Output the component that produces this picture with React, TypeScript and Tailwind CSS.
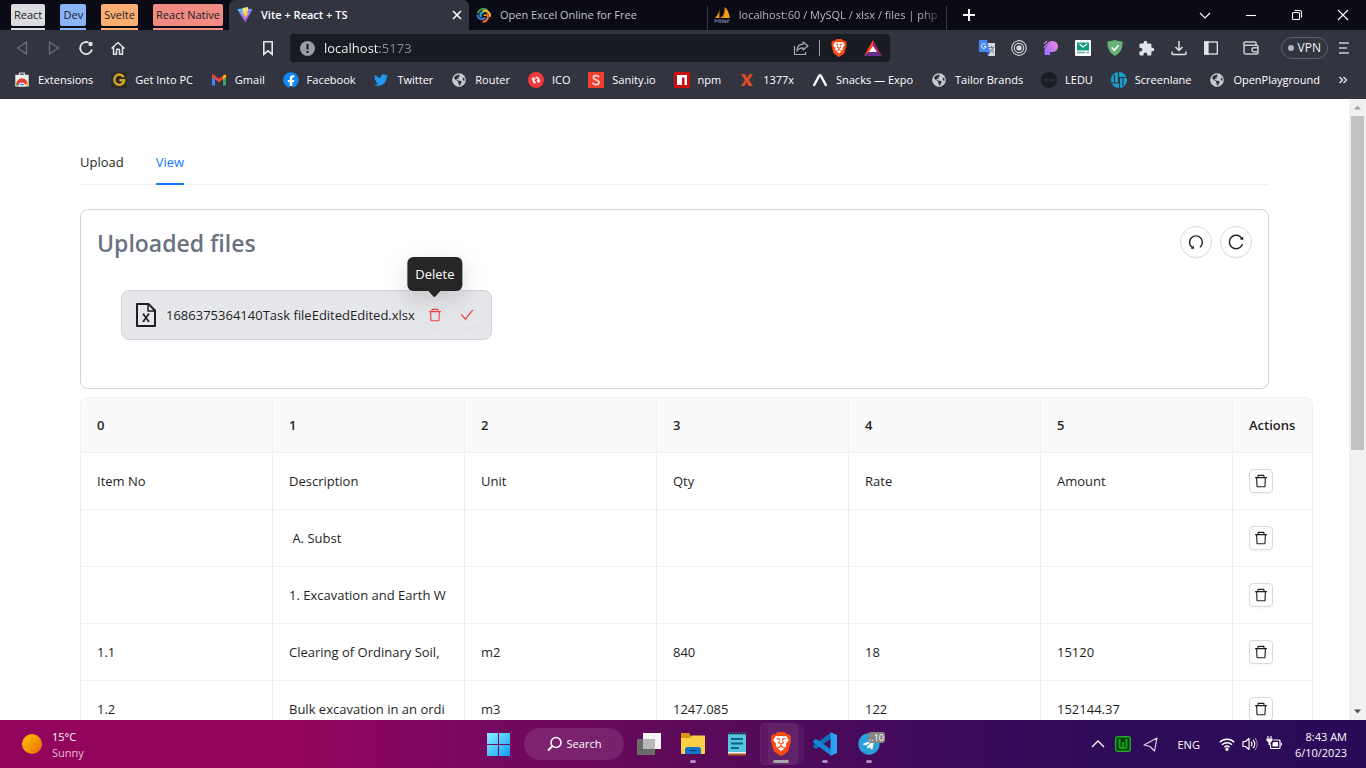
import type { ReactNode } from "react";
import {
  AiOutlineCheck,
  AiOutlineDelete,
  AiOutlineReload,
  AiOutlineUndo,
} from "react-icons/ai";
import { FaFacebook, FaGlobeAmericas, FaTelegram, FaTwitter } from "react-icons/fa";
import { MdExtension } from "react-icons/md";
import { SiBrave } from "react-icons/si";

/* ---------- icons ---------- */

const Vite = () => (
  <svg className="size-4" viewBox="0 0 16 16">
    <defs>
      <linearGradient id="vite" x1="0" y1="0" x2="0.6" y2="1">
        <stop offset="0" stopColor="#41d1ff" />
        <stop offset="1" stopColor="#bd34fe" />
      </linearGradient>
      <linearGradient id="bolt" x1="0" y1="0" x2="0" y2="1">
        <stop offset="0" stopColor="#ffea83" />
        <stop offset="1" stopColor="#ffa800" />
      </linearGradient>
    </defs>
    <path d="M0.3 2.2 7.6 1l8 1.2L8.3 15.6z" fill="url(#vite)" />
    <path d="M11 0 5.8 1.1 5.4 7l1.7-.4-.5 2.6 1.6-.5-1 4.6L11.6 6l-1.8.3L11 3z" fill="url(#bolt)" />
  </svg>
);

const Swirl = () => (
  <svg className="size-4" viewBox="0 0 16 16" fill="none" strokeWidth="2.2" strokeLinecap="round">
    <path d="M2 5.500C4 1.500 8.500 .8 11 3.200" stroke="#3f9b54" />
    <path d="M7 4.500C10 3 14 5 14 9" stroke="#f3b52d" />
    <path d="M11 7.500C13 10 11.500 13.800 7.500 14.800" stroke="#e96b2c" />
    <path d="M8.500 11.200C5.500 13.500 2 11.500 1.600 8.500" stroke="#3a77c8" />
    <path d="M5 9.200C3.800 7.800 4.800 5.600 7 5.400" stroke="#2aa5c9" />
    <path d="M8 8.300h1.500" stroke="#f3b52d" strokeWidth="1.500" />
  </svg>
);

const Sails = () => (
  <svg className="size-[17px]" viewBox="0 0 17 17">
    <path d="M5.500 1C5.500 5 4 8.500 1 11h4.500zM10.500 0c.8 4 0 8-4 11H16C15.500 6 13.500 2 10.500 0z" fill="#f29a1f" />
    <path d="M10.500 2.500c0 4-.5 6-2 8.500" stroke="#8a4f08" strokeWidth=".7" fill="none" />
    <path d="M1 16v-3h2v2M5 16v-3h2v3M9 16v-3l2 2 1-2v3M14 16v-3h2" stroke="#6f7391" strokeWidth="1.100" fill="none" />
  </svg>
);

const Brave = ({ big = false }: { big?: boolean }) => (
  <span className={big ? "relative block size-6" : "relative block size-[18px]"}>
    <svg className="absolute inset-0 size-full" viewBox="0 0 24 24">
      <path d="M6 4h12l2 4-3 10-5 4-5-4L4 8z" fill="#fff" />
    </svg>
    <SiBrave className="absolute inset-0 size-full text-[#fb4a12]" />
  </span>
);

const Bat = () => (
  <svg className="h-4 w-[18px]" viewBox="0 0 18 16">
    <path d="M9 0 0 16l9-6z" fill="#ff4724" />
    <path d="M9 0v7l3 4 6 5z" fill="#9e1f63" />
    <path d="M0 16h18l-6-5H6z" fill="#662d91" />
    <path d="m9 6-4 6h8z" fill="#fff" />
  </svg>
);

const Translate = () => (
  <svg className="size-4" viewBox="0 0 16 16">
    <path d="M7 3h9v13H9z" fill="#d5d7db" />
    <path d="M0 0h8l3 12H0z" fill="#4a86f0" />
    <path d="M7.500 12H11l-2 4z" fill="#2a5bc4" />
    <path d="M6.500 4.600A2.300 2.300 0 1 0 7 6.500H5" stroke="#fff" strokeWidth="1" fill="none" />
    <path d="M10 7.500h5M12.500 6v1.500M14 7.500c0 2-1.500 4-3 5M11.500 9c.5 1.500 2 3 3.500 3.700" stroke="#7b7f86" fill="none" />
  </svg>
);

const Rings = () => (
  <svg className="size-4" viewBox="0 0 16 16" fill="none" stroke="#c4c6cc" strokeWidth="1.200">
    <circle cx="8" cy="8" r="7.300" />
    <circle cx="8" cy="8" r="4.700" />
    <circle cx="8" cy="8" r="2.200" fill="#e3e4e7" />
  </svg>
);

const PurpleP = () => (
  <svg className="size-4" viewBox="0 0 16 16">
    <defs>
      <linearGradient id="pp" x1="1" y1="0" x2="0" y2="1">
        <stop offset="0" stopColor="#f58bd8" />
        <stop offset="1" stopColor="#8f6bff" />
      </linearGradient>
    </defs>
    <path d="M8 1h1.500a5.500 5.500 0 0 1 0 11H7v3H1.500V9z" fill="url(#pp)" />
    <path d="m1 4 3-3M1 7.500 7 1.500" stroke="#c77be8" strokeWidth="1.200" />
  </svg>
);

const MailBox = () => (
  <svg className="size-4" viewBox="0 0 16 16">
    <rect width="16" height="16" rx="1" fill="#fff" />
    <path d="M2 2.500h12v8H2z" fill="#109a80" />
    <path d="m4.500 4 3.500 3L12 4" stroke="#fff" strokeWidth="1.300" fill="none" />
    <path d="M2 12.500h8M11.500 12.500H14" stroke="#63a99c" strokeWidth="1.500" />
  </svg>
);

const Shield = () => (
  <svg className="size-4" viewBox="0 0 16 16">
    <path d="M8 0c2.500.8 5 1.300 7.500 1.500C15.800 8.500 13.500 13 8 16 2.500 13 .2 8.500.5 1.500 3 1.300 5.500.8 8 0z" fill="#67b279" />
    <path d="m4.800 7.500 2.500 2.700 4.200-5" stroke="#fff" strokeWidth="1.600" fill="none" />
  </svg>
);

const Store = () => (
  <svg className="size-4" viewBox="0 0 16 16">
    <path d="M5.500 3V1.200h5V3" stroke="#c9ccd1" strokeWidth="1.300" fill="none" />
    <path d="M1.300 2.800h13.400V14H1.300z" fill="#eceef0" />
    <path d="M2.300 12a5.700 5.700 0 0 1 11.400 0v2H2.300z" fill="#e34234" />
    <path d="M2.300 10.500 5.800 14H2.300z" fill="#2fa552" />
    <path d="M13.700 9.500 10.200 14h3.500z" fill="#f6c026" />
    <path d="M5 14a3 3 0 0 1 6 0z" fill="#4285f4" stroke="#fff" strokeWidth="1" />
    <path d="M1.300 14h13.400" stroke="#eceef0" />
  </svg>
);

const GetInto = () => (
  <svg className="size-4" viewBox="0 0 16 16">
    <rect width="16" height="16" fill="#2c2b2b" />
    <path d="M12.700 5.200A5 5.200 0 1 0 13 9.500V8.300H8.500" stroke="#d9a520" strokeWidth="2.400" fill="none" />
  </svg>
);

const Gmail = () => (
  <svg className="size-4" viewBox="0 0 16 16">
    <path d="M1 4v9.500h3V6z" fill="#4285f4" />
    <path d="M15 4v9.500h-3V6z" fill="#34a853" />
    <path d="M1 5V2.600h1.800L8 6.800l5.200-4.200L15 5l-7 5.500z" fill="#ea4335" />
    <path d="m12 4 1.500-1.300L15 3v2.200l-3 2.200z" fill="#fbbc04" />
  </svg>
);

const Ico = () => (
  <svg className="size-4" viewBox="0 0 16 16">
    <circle cx="8" cy="8" r="8" fill="#f03a3e" />
    <path d="M3.200 7.500 5.500 5l2.300 2.500zM12.800 8.500 10.500 11 8.200 8.500z" fill="#fff" />
    <path d="M5.500 7v1.500A2 2 0 0 0 7.500 10.500H8M10.500 9V7.500A2 2 0 0 0 8.500 5.500H7.500" stroke="#fff" strokeWidth="1.700" fill="none" />
  </svg>
);

const Sanity = () => (
  <svg className="size-4" viewBox="0 0 16 16">
    <rect width="16" height="16" fill="#f03e2f" />
    <path d="M11 5.200C10.300 3 5.300 3.200 5.300 5.600c0 2.700 5.700 1.800 5.700 4.800 0 2.800-5.600 2.800-6.200.3" stroke="#ffd9d5" strokeWidth="1.700" fill="none" />
  </svg>
);

const Npm = () => (
  <svg className="size-4" viewBox="0 0 16 16">
    <rect width="16" height="16" fill="#c90c0c" />
    <path d="M3 3h10v10h-2.500V5.500H8V13H3z" fill="#fff" />
  </svg>
);

const Ex = () => (
  <svg className="size-4" viewBox="0 0 16 16">
    <path d="M2 2h4l2 4 2.500-4H14L10 8l4 6H9.500L7.500 10 5.500 14H2l4-6z" fill="#dc4a24" />
  </svg>
);

const Expo = () => (
  <svg className="size-4" viewBox="0 0 16 16">
    <path d="M2.200 13 7 4c.6-1 1.400-1 2 0l4.800 9" stroke="#fff" strokeWidth="2.400" strokeLinecap="round" fill="none" />
  </svg>
);

const Ledu = () => (
  <svg className="size-4" viewBox="0 0 16 16">
    <circle cx="8" cy="8" r="8" fill="#1b1d23" />
    <path d="M3 7v2.200h1.500M7 7H5.500v2.200H7M8.300 7v2.200c1.600 0 1.600-2.200 0-2.200M11 7v2.200h1.800V7" stroke="#383a43" strokeWidth=".7" fill="none" />
  </svg>
);

const Screenlane = () => (
  <svg className="size-4" viewBox="0 0 16 16">
    <circle cx="8" cy="8" r="8" fill="#17a2d2" />
    <path d="M7.500 0v11H0M3.500 2.500V11M8.500 16V5.500H16M12 5.500V14" stroke="#323440" strokeWidth="1.200" fill="none" />
  </svg>
);

const Globe = () => <FaGlobeAmericas className="size-[14px] text-[#c6c8cc]" />;

const Facebook = () => (
  <span className="rounded-full bg-[radial-gradient(#fff_55%,transparent_56%)]">
    <FaFacebook className="size-4 text-[#1187f3]" />
  </span>
);

const ExcelFile = () => (
  <svg className="h-6 w-5" viewBox="0 0 20 24" fill="none" stroke="#1f1f1f" strokeWidth="2">
    <path d="M1 1h11.500L19 7.500V23H1z" strokeLinejoin="round" />
    <path d="M12 1v7h7" strokeWidth="1.500" />
    <path d="m7.200 11 5.600 7.500M12.800 11l-5.600 7.500" strokeWidth="1.600" />
    <path d="M6.500 11h2M11.500 11h2M6.500 18.500h2M11.500 18.500h2" strokeWidth=".9" />
  </svg>
);

/* ---------- browser chrome ---------- */

const groups = [
  { label: "React", box: "bg-[#dadce0]" },
  { label: "Dev", box: "bg-[#8ab4f8]" },
  { label: "Svelte", box: "bg-[#fcad70]" },
  { label: "React Native", box: "bg-[#f28b82]" },
];

function TabStrip() {
  return (
    <header className="flex h-[30px] shrink-0 bg-[#0a0b14] text-[11px] text-[#c3c4ca]">
      <div className="flex w-[229px] shrink-0 justify-between pt-1 pr-1.5 pl-[11px]">
        {groups.map((g) => (
          <button key={g.label} className="flex flex-col gap-0.5 text-[#202124]">
            <span className={`rounded-xs px-[3px] leading-[22px] ${g.box}`}>{g.label}</span>
            <span className={`h-0.5 w-full ${g.box}`} />
          </button>
        ))}
      </div>
      <div className="flex w-60 shrink-0 items-center gap-2 rounded-t-md bg-[#323440] pr-1.5 pl-2 font-semibold text-white">
        <Vite />
        <span className="flex-1">Vite + React + TS</span>
        <button aria-label="Close tab">
          <svg className="size-3" viewBox="0 0 12 12">
            <path d="m2 2 8 8M10 2l-8 8" stroke="#fff" strokeWidth="1.500" />
          </svg>
        </button>
      </div>
      <div className="flex w-[239px] shrink-0 items-center gap-2 pl-[7px]">
        <Swirl />
        <span className="flex-1">Open Excel Online for Free</span>
        <span className="mt-1.5 h-6 w-px bg-[#3a3b45]" />
      </div>
      <div className="flex w-[239px] shrink-0 items-center gap-2 pl-1.5">
        <Sails />
        <span className="w-[202px] overflow-hidden bg-[linear-gradient(90deg,#c3c4ca_180px,transparent_206px)] bg-clip-text whitespace-nowrap text-transparent">
          localhost:60 / MySQL / xlsx / files | php
        </span>
        <span className="mt-1.5 ml-auto h-6 w-px bg-[#3a3b45]" />
      </div>
      <button aria-label="New tab" className="flex w-11 items-center justify-center">
        <svg className="size-3" viewBox="0 0 12 12">
          <path d="M6 0v12M0 6h12" stroke="#fff" strokeWidth="2" />
        </svg>
      </button>
      <div className="ml-auto flex text-white">
        {[
          ["Search tabs", "m1 4 5 5 5-5"],
          ["Minimize", "M1 6.500h10"],
          ["Restore", "M1.500 4.500a1 1 0 0 1 1-1h5a1 1 0 0 1 1 1v5a1 1 0 0 1-1 1h-5a1 1 0 0 1-1-1zM3.500 1.500h5a2 2 0 0 1 2 2v5"],
          ["Close window", "m1 1 10 10M11 1 1 11"],
        ].map(([label, d]) => (
          <button key={label} aria-label={label} className="flex w-[46px] items-center justify-center">
            <svg className="size-3" viewBox="0 0 12 12" fill="none" stroke="currentColor" strokeWidth="1.100">
              <path d={d} />
            </svg>
          </button>
        ))}
      </div>
    </header>
  );
}

function Tool({ label, children }: { label: string; children: ReactNode }) {
  return (
    <button aria-label={label} className="flex w-8 shrink-0 items-center justify-center text-[#e3e4e8]">
      {children}
    </button>
  );
}

function Toolbar() {
  return (
    <div className="flex h-9 shrink-0 items-center bg-[#323440] px-1.5">
      <Tool label="Back">
        <svg className="size-4" viewBox="0 0 16 16" fill="none" stroke="#6c6e79" strokeWidth="1.400" strokeLinejoin="round">
          <path d="M12.500 2v12L3.500 8z" />
        </svg>
      </Tool>
      <Tool label="Forward">
        <svg className="size-4" viewBox="0 0 16 16" fill="none" stroke="#6c6e79" strokeWidth="1.400" strokeLinejoin="round">
          <path d="M3.500 2v12l9-6z" />
        </svg>
      </Tool>
      <Tool label="Reload">
        <svg className="size-4" viewBox="0 0 16 16" fill="none" stroke="currentColor" strokeWidth="1.800">
          <path d="M10.500 2.500A6 6 0 1 0 14 9.500" />
          <circle cx="12.500" cy="4" r="2.200" fill="currentColor" stroke="none" />
        </svg>
      </Tool>
      <Tool label="Home">
        <svg className="size-4" viewBox="0 0 16 16" fill="none" stroke="currentColor" strokeWidth="1.500" strokeLinejoin="round">
          <path d="m1.500 8.500 6.500-6 6.500 6M3.500 7v7.200h3V10.500a1.500 1.500 0 0 1 3 0v3.700h3V7" />
        </svg>
      </Tool>
      <button aria-label="Bookmark this tab" className="ml-[118px] flex w-8 shrink-0 justify-center text-[#e3e4e8]">
        <svg className="size-4" viewBox="0 0 16 16" fill="none" stroke="currentColor" strokeWidth="1.600">
          <path d="M3.800 1.800h8.400v12.400L8 10.800l-4.200 3.400z" />
        </svg>
      </button>
      <div className="ml-1.5 flex h-7 w-[600px] items-center rounded bg-[#191b22] pr-2 pl-2.5">
        <svg className="size-[15px]" viewBox="0 0 15 15">
          <circle cx="7.500" cy="7.500" r="7.500" fill="#9b9da5" />
          <path d="M7.500 3v5.500M7.500 10v2" stroke="#191b22" strokeWidth="2" />
        </svg>
        <input
          aria-label="Address"
          defaultValue="localhost:5173"
          className="ml-[9px] min-w-0 flex-1 bg-[linear-gradient(90deg,#fff_56px,#8b8d94_56px)] bg-clip-text pt-px text-[13px] text-transparent outline-none"
        />
        <button aria-label="Share" className="mr-2.5">
          <svg className="size-4" viewBox="0 0 16 16" fill="none" stroke="#a9abb2" strokeWidth="1.200">
            <path d="M1.500 6v8.500h11V12" />
            <path d="M10 2l5 4-5 4V7.800C7 7.800 5 9 4 11c0-4 2.500-6.600 6-6.800z" strokeLinejoin="round" />
          </svg>
        </button>
        <span className="h-4 w-px bg-[#9b9da5]" />
        <button aria-label="Shields" className="ml-2.5">
          <Brave />
        </button>
        <button aria-label="Rewards" className="ml-4">
          <Bat />
        </button>
      </div>
      <div className="ml-auto flex items-center">
        <Tool label="Translate"><Translate /></Tool>
        <Tool label="Focus"><Rings /></Tool>
        <Tool label="Palette"><PurpleP /></Tool>
        <Tool label="Mail"><MailBox /></Tool>
        <Tool label="Ad guard"><Shield /></Tool>
        <Tool label="Extensions"><MdExtension className="size-[17px]" /></Tool>
        <Tool label="Downloads">
          <svg className="size-4" viewBox="0 0 16 16" fill="none" stroke="currentColor" strokeWidth="1.500">
            <path d="M8 1v9M4.500 7 8 10.500 11.500 7M1 11.500v2a1 1 0 0 0 1 1h12a1 1 0 0 0 1-1v-2" />
          </svg>
        </Tool>
        <Tool label="Sidebar">
          <svg className="size-4" viewBox="0 0 16 16" fill="none" stroke="currentColor" strokeWidth="1.300">
            <rect x="1.700" y="2" width="12.600" height="12" />
            <path d="M2 2h3v12H2z" fill="currentColor" />
          </svg>
        </Tool>
        <span className="w-2" />
        <Tool label="Wallet">
          <svg className="size-4" viewBox="0 0 16 16" fill="none" stroke="#c9cad0" strokeWidth="1.500">
            <path d="M13 5V3a1 1 0 0 0-1-1H2.300a1.600 1.600 0 0 0 0 3.200H14a1 1 0 0 1 1 1V13a1 1 0 0 1-1 1H2.500A1.500 1.500 0 0 1 1 12.500V4" />
            <path d="M15 7.800h-4a2 2 0 0 0 0 4h4" />
          </svg>
        </Tool>
        <button className="ml-3.5 flex h-[22px] items-center gap-1 rounded-full border border-[#5c5e6a] px-1.5 text-[12px] text-[#f0f0f3]">
          <span className="size-1.5 rounded-full bg-[#b5b6c0]" />
          VPN
        </button>
        <Tool label="Menu">
          <svg className="size-4" viewBox="0 0 16 16" stroke="#c9cad0" strokeWidth="1.600">
            <path d="M3 3h10M3 8h8M3 13h10" />
          </svg>
        </Tool>
      </div>
    </div>
  );
}

const bookmarks: [string, ReactNode][] = [
  ["Extensions", <Store />],
  ["Get Into PC", <GetInto />],
  ["Gmail", <Gmail />],
  ["Facebook", <Facebook />],
  ["Twitter", <FaTwitter className="size-[14px] text-[#1d9bf0]" />],
  ["Router", <Globe />],
  ["ICO", <Ico />],
  ["Sanity.io", <Sanity />],
  ["npm", <Npm />],
  ["1377x", <Ex />],
  ["Snacks — Expo", <Expo />],
  ["Tailor Brands", <Globe />],
  ["LEDU", <Ledu />],
  ["Screenlane", <Screenlane />],
  ["OpenPlayground", <Globe />],
];

function BookmarkBar() {
  return (
    <nav className="flex h-[33px] shrink-0 items-start justify-between bg-[#323440] pt-1.5 pr-[18px] pl-3.5 text-[11px] leading-4 text-white">
      {bookmarks.map(([label, icon]) => (
        <a key={label} href="#" className="flex items-center gap-2 whitespace-nowrap">
          <span className="flex size-4 items-center justify-center">{icon}</span>
          {label}
        </a>
      ))}
      <button aria-label="More bookmarks" className="flex h-4 items-center">
        <svg className="size-2.5" viewBox="0 0 10 10" fill="none" stroke="#e3e4e8" strokeWidth="1.400">
          <path d="m1.500 2 3 3-3 3M5.500 2l3 3-3 3" />
        </svg>
      </button>
    </nav>
  );
}

/* ---------- page ---------- */

const columns = ["0", "1", "2", "3", "4", "5"];
const rows = [
  ["Item No", "Description", "Unit", "Qty", "Rate", "Amount"],
  ["", "\u00a0A. Subst", "", "", "", ""],
  ["", "1. Excavation and Earth W", "", "", "", ""],
  ["1.1", "Clearing of Ordinary Soil,", "m2", "840", "18", "15120"],
  ["1.2", "Bulk excavation in an ordi", "m3", "1247.085", "122", "152144.37"],
];

function FilesCard() {
  const round =
    "flex size-8 items-center justify-center rounded-full border border-[#d9d9d9] bg-white shadow-[0_2px_0_rgba(0,0,0,0.02)]";
  const danger =
    "flex size-6 items-center justify-center rounded text-[#ef4444] shadow-[0_2px_0_rgba(0,0,0,0.02)]";
  return (
    <section className="mt-6 h-[180px] rounded-lg border border-gray-300 p-4">
      <div className="flex items-start justify-between">
        <h1 className="text-[23px] leading-[34px] font-semibold text-gray-500">Uploaded files</h1>
        <div className="flex gap-2">
          <button aria-label="Undo" className={round}>
            <AiOutlineUndo className="size-[18px]" />
          </button>
          <button aria-label="Reload" className={round}>
            <AiOutlineReload className="size-[18px]" />
          </button>
        </div>
      </div>
      <div className="mt-[30px] ml-6 flex h-[50px] w-fit items-center rounded-lg border border-gray-300 bg-gray-200 pr-3 pl-3.5">
        <ExcelFile />
        <span className="mr-2 ml-2.5 pt-0.5">1686375364140Task fileEditedEdited.xlsx</span>
        <div className="relative">
          <button aria-label="Delete" aria-describedby="delete-tip" className={danger}>
            <AiOutlineDelete className="size-4" />
          </button>
          <div
            id="delete-tip"
            role="tooltip"
            className="absolute bottom-9 left-1/2 -translate-x-1/2 rounded-md bg-[#262626] px-2 py-1.5 leading-[22px] text-white shadow-[0_6px_16px_rgba(0,0,0,0.08),0_9px_28px_8px_rgba(0,0,0,0.05)]"
          >
            Delete
            <svg className="absolute top-full left-1/2 h-1.5 w-3 -translate-x-1/2" viewBox="0 0 12 6">
              <path d="M0 0h12L7 5.500a1.500 1.500 0 0 1-2 0z" fill="#262626" />
            </svg>
          </div>
        </div>
        <button aria-label="Confirm" className={`ml-2 ${danger}`}>
          <AiOutlineCheck className="size-4" />
        </button>
      </div>
    </section>
  );
}

function SheetTable() {
  return (
    <table className="mt-2 w-[1233px] table-fixed border-separate border-spacing-0 rounded-t-lg border-t border-l border-[#f0f0f0] text-left">
      <thead>
        <tr className="h-[55px]">
          {columns.map((c) => (
            <th key={c} className="w-48 border-r border-b border-[#f0f0f0] bg-[#fafafa] px-4 pt-0.5 font-semibold first:rounded-tl-lg">
              {c}
            </th>
          ))}
          <th className="w-20 rounded-tr-lg border-r border-b border-[#f0f0f0] bg-[#fafafa] px-4 pt-0.5 font-semibold">
            Actions
          </th>
        </tr>
      </thead>
      <tbody>
        {rows.map((row, i) => (
          <tr key={i} className="h-[57px]">
            {row.map((cell, j) => (
              <td key={j} className="border-r border-b border-[#f0f0f0] px-4 pt-0.5 whitespace-nowrap">
                {cell}
              </td>
            ))}
            <td className="border-r border-b border-[#f0f0f0] px-4">
              <button
                aria-label="Delete row"
                className="flex size-6 items-center justify-center rounded border border-[#d9d9d9] shadow-[0_2px_0_rgba(0,0,0,0.02)]"
              >
                <AiOutlineDelete className="size-4" />
              </button>
            </td>
          </tr>
        ))}
      </tbody>
    </table>
  );
}

function Page() {
  return (
    <div className="flex min-h-0 flex-1 bg-white">
      <main className="min-w-0 flex-1 overflow-hidden px-20 pt-10 text-[13px] text-[#1f1f1f]">
        <div role="tablist" className="flex h-[46px] gap-8 border-b border-[#f0f0f0]">
          <button role="tab" aria-selected="false" className="h-[46px] pt-0.5">
            Upload
          </button>
          <button role="tab" aria-selected="true" className="h-[46px] border-b-2 border-[#1677ff] pt-1 text-[#1677ff]">
            View
          </button>
        </div>
        <FilesCard />
        <SheetTable />
      </main>
      <div className="flex w-[17px] shrink-0 flex-col items-center bg-[#f1f1f1]">
        <svg className="h-[17px] w-full shrink-0" viewBox="0 0 17 17">
          <path d="m5 10.500 3.500-4 3.500 4z" fill="#a3a3a3" />
        </svg>
        <span className="h-[334px] w-[13px] bg-[#c1c1c1]" />
        <svg className="mt-auto h-[17px] w-full shrink-0" viewBox="0 0 17 17">
          <path d="m5 6.500 3.500 4 3.500-4z" fill="#505050" />
        </svg>
      </div>
    </div>
  );
}

/* ---------- taskbar ---------- */

function Task({ label, dot, children }: { label: string; dot?: string; children: ReactNode }) {
  return (
    <button aria-label={label} className="relative flex h-12 w-11 items-center justify-center">
      {children}
      {dot && <span className={`absolute bottom-[5px] h-[3px] rounded-full ${dot}`} />}
    </button>
  );
}

function Taskbar() {
  return (
    <footer className="flex h-12 shrink-0 items-center bg-[linear-gradient(90deg,#93045d_0%,#93045d_22%,#790861_34%,#5d0a59_50%,#3f0a5c_68%,#2f0b59_80%,#2a0b57_100%)] text-[11px] text-white">
      <div className="flex flex-1 items-center gap-2.5 pl-[22px] leading-4">
        <span className="size-5 rounded-full bg-linear-to-br from-[#ffc400] to-[#e86a00]" />
        <div className="pt-0.5">
          <p>15°C</p>
          <p className="text-[#e3bcd4]">Sunny</p>
        </div>
      </div>
      <div className="mr-0.5 flex items-center">
        <Task label="Start">
          <svg className="size-[23px]" viewBox="0 0 23 23">
            <defs>
              <linearGradient id="win" x1="0" y1="0" x2="1" y2="1">
                <stop offset="0" stopColor="#8df0ff" />
                <stop offset="1" stopColor="#0f9af5" />
              </linearGradient>
            </defs>
            <path d="M0 0h11v11H0zM12 0h11v11H12zM0 12h11v11H0zM12 12h11v11H12z" fill="url(#win)" />
          </svg>
        </Task>
        <button className="mr-[3px] ml-1 flex h-8 w-[100px] items-center justify-center gap-1 rounded-full bg-white/10">
          <svg className="size-4" viewBox="0 0 16 16" fill="none" stroke="#fff" strokeWidth="1.500">
            <circle cx="9" cy="6.500" r="5" />
            <path d="M5.500 10 1 14.500" strokeWidth="1.900" />
          </svg>
          Search
        </button>
        <Task label="Task view">
          <svg className="size-6" viewBox="0 0 24 24">
            <path d="M6 1h18v16H6z" fill="#f4f4f4" />
            <path d="M0 7h18v16H0z" fill="#6b6b6b" />
            <path d="M6 7h12v10H6z" fill="#b9b9b9" />
          </svg>
        </Task>
        <Task label="File Explorer" dot="w-1.5 bg-[#b48abb]">
          <svg className="size-6" viewBox="0 0 24 24">
            <path d="M0 2a1 1 0 0 1 1-1h7l2 3v4H0z" fill="#d9950b" />
            <path d="M0 6h8.500L11 3.500h13V21a1 1 0 0 1-1 1H1a1 1 0 0 1-1-1z" fill="#fccf47" />
            <path d="M4 22v-4.500A2.500 2.500 0 0 1 6.500 15h11a2.500 2.500 0 0 1 2.500 2.500V22z" fill="#1374c9" />
            <path d="M8 18.500h8" stroke="#0b4f95" strokeWidth="1.300" />
          </svg>
        </Task>
        <Task label="Notepad">
          <svg className="size-6" viewBox="0 0 24 24">
            <path d="M3 21h18v2.500H3z" fill="#a55a1c" />
            <path d="M3 19h18v2.500H3z" fill="#f2f2f2" />
            <path d="M3 2h18v18H3z" fill="#55c5de" />
            <path d="M5 0v3M8 0v3M11 0v3M14 0v3M17 0v3M20 0v3" stroke="#186786" strokeWidth="1.300" />
            <path d="M6 7h12M6 11.500h12M6 16h8" stroke="#0f6280" strokeWidth="1.800" />
          </svg>
        </Task>
        <div className="relative">
          <span className="absolute top-1 right-[-1px] h-10 w-9 rounded bg-white/5" />
          <span className="absolute top-1 left-0.5 h-10 w-9 rounded bg-white/5 ring-1 ring-white/10" />
          <Task label="Brave" dot="w-4 bg-[#a9a6aa]">
            <Brave big />
          </Task>
        </div>
        <Task label="Visual Studio Code" dot="w-1.5 bg-[#a78abb]">
          <svg className="size-6" viewBox="0 0 24 24">
            <path d="M2 16.500.3 15a1 1 0 0 1 0-1.400L17.800.4V6.800L4 16.500a1.500 1.500 0 0 1-2 0z" fill="#0e72b8" />
            <path d="M2 7.500.3 9a1 1 0 0 0 0 1.400l17.500 13.200V17.200L4 7.500a1.500 1.500 0 0 0-2 0z" fill="#1488d8" />
            <path d="M17.500.3 24 3v18l-6.500 2.700z" fill="#29a3f2" />
          </svg>
        </Task>
        <Task label="Telegram" dot="w-1.5 bg-[#a78abb]">
          <span className="rounded-full bg-[radial-gradient(#fff_60%,transparent_61%)]">
            <FaTelegram className="size-[22px] text-[#2ba0db]" />
          </span>
          <span className="absolute top-3 right-1.5 h-[11px] rounded-[3px] bg-[#858585] px-px text-[9px] leading-[11px]">
            ..10
          </span>
        </Task>
      </div>
      <div className="flex flex-1 items-center justify-end pr-[19px]">
        <svg className="size-3.5" viewBox="0 0 14 14" fill="none" stroke="#fff" strokeWidth="1.300">
          <path d="m1 10 6-6 6 6" />
        </svg>
        <svg className="ml-2.5 size-4" viewBox="0 0 16 16" fill="none">
          <rect x=".7" y=".7" width="14.600" height="14.600" rx="2" fill="#063d1a" stroke="#1fae1f" strokeWidth="1.400" />
          <path d="M4.500 3v7.500a1.500 1.500 0 0 0 1.500 1.500h4a1.500 1.500 0 0 0 1.500-1.500V3M8 6v5" stroke="#12a012" strokeWidth="2.200" />
        </svg>
        <svg className="ml-3 size-[15px]" viewBox="0 0 15 15" fill="none" stroke="#d9d2e4" strokeWidth="1.200" strokeLinejoin="round">
          <path d="M14 1 1 8l6 1.500L11.500 14z" />
        </svg>
        <span className="mx-[19px] pt-0.5">ENG</span>
        <svg className="size-4" viewBox="0 0 16 16" fill="none" stroke="#fff" strokeWidth="1.400">
          <path d="M.8 6.200a10.300 10.300 0 0 1 14.400 0M3 8.800a7.200 7.200 0 0 1 10 0M5.300 11.200a4 4 0 0 1 5.400 0" />
          <circle cx="8" cy="13.200" r="1" fill="#fff" />
        </svg>
        <svg className="ml-[7px] size-4" viewBox="0 0 16 16" fill="none" stroke="#fff" strokeWidth="1.200">
          <path d="M1 5.500h2.500L7 2.500v11l-3.500-3H1zM9 5.800a3 3 0 0 1 0 4.400M11 3.800a6 6 0 0 1 0 8.400" strokeLinejoin="round" />
          <path d="M13 2a9 9 0 0 1 0 12" stroke="#8a77a5" />
        </svg>
        <svg className="ml-2 size-4" viewBox="0 0 16 16" fill="none" stroke="#fff" strokeWidth="1.200">
          <path d="M7.500 4H13a1 1 0 0 1 1 1v6.500a1 1 0 0 1-1 1H5.500a1 1 0 0 1-1-1V8.500" />
          <path d="M8 6h4v4.500H6.500V7z" fill="#fff" stroke="none" />
          <path d="M15.300 7v2.500M2 0v2.500M5 0v2.500" />
          <path d="M.5 2.500h6v2L4.500 6.500V9h-2V6.500L.5 4.500z" fill="#fff" stroke="none" />
        </svg>
        <div className="ml-[13px] pt-0.5 text-right leading-4">
          <p>8:43 AM</p>
          <p>6/10/2023</p>
        </div>
      </div>
    </footer>
  );
}

export default function App() {
  return (
    <div className="flex h-screen flex-col overflow-hidden font-['Open_Sans','Noto_Sans',sans-serif]">
      <TabStrip />
      <Toolbar />
      <BookmarkBar />
      <Page />
      <Taskbar />
    </div>
  );
}
